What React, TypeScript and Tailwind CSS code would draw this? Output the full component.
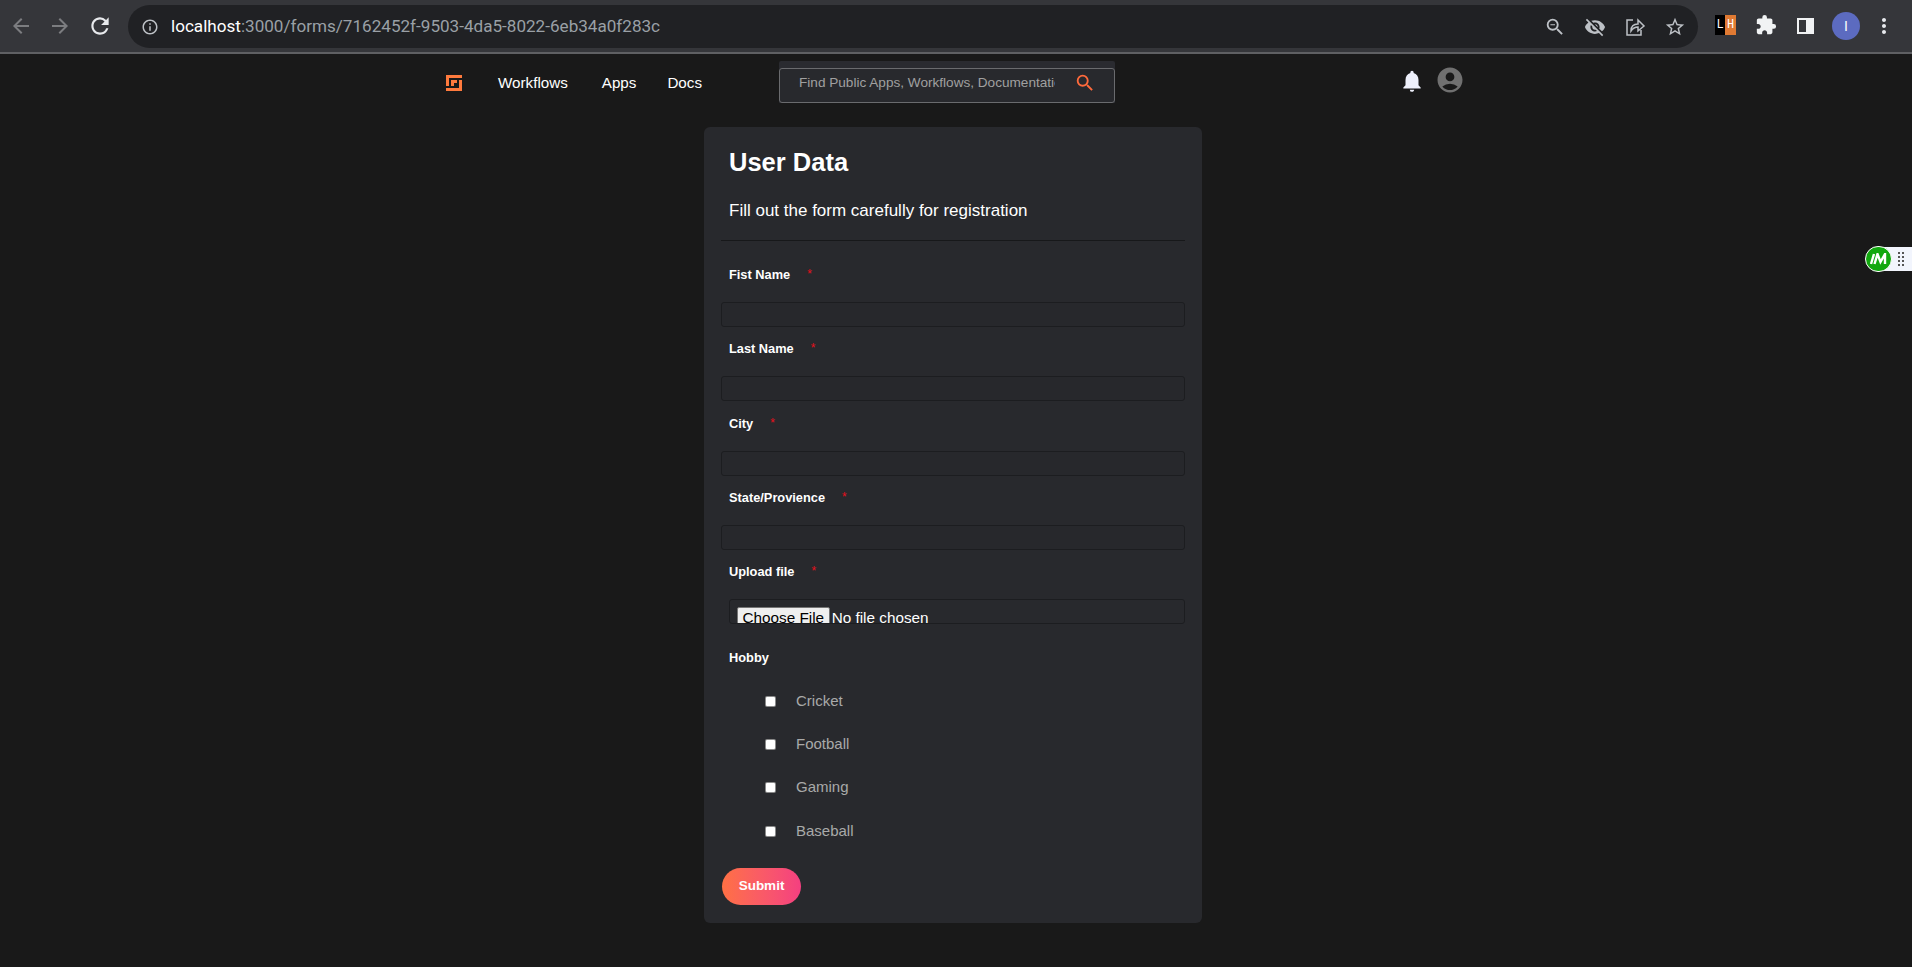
import React from "react";
import {
  MdArrowBack, MdArrowForward, MdRefresh, MdInfoOutline, MdZoomOut, MdVisibilityOff, MdStarBorder,
  MdExtension, MdMoreVert, MdNotifications, MdAccountCircle, MdSearch,
} from "react-icons/md";

const arial = "font-['Liberation_Sans',Arial,sans-serif]";

function Field({ label, required = true, file = false }: { label: string; required?: boolean; file?: boolean }) {
  return (
    <div className="h-[74.3px]">
      <div className="flex h-4 mb-[19px] pl-2 text-[12.8px] leading-4 font-bold text-white">
        <span>{label}</span>
        {required && <span className="ml-[17px] -mt-px text-[12px] font-normal text-[#e8101c]">*</span>}
      </div>
      {file ? (
        <div className="ml-2 h-[25px] border border-[#1c1d20] rounded-[3px] pl-[7px] pt-[7px] overflow-hidden">
          <input
            type="file"
            className="block text-[15.3px] leading-[18px] text-white file:bg-[#efefef] file:text-black file:border file:border-[#767676] file:border-solid file:rounded-[2px] file:px-[4.5px] file:py-px file:mr-[2px] file:h-[22px]"
          />
        </div>
      ) : (
        <input type="text" className="block w-full h-[25px] bg-[#27282c] border border-[#1c1d20] rounded-[3px] outline-none" />
      )}
    </div>
  );
}

function Hobby({ label }: { label: string }) {
  return (
    <label className="flex items-center h-[43.3px] pl-[45px]">
      <input type="checkbox" className="appearance-none w-[9px] h-[9px] bg-white rounded-[1px] shadow-[0_0_0_1px_#8a8a8a]" />
      <span className="ml-[21px] text-[15px] text-[#a9a9a9]">{label}</span>
    </label>
  );
}

export default function App() {
  return (
    <div className={`relative h-[967px] w-[1912px] overflow-hidden bg-[#191919] ${arial}`}>
      {/* Browser chrome */}
      <header className="flex items-start h-[54px] bg-[#35363a] border-b-2 border-[#5f6063]">
        <div className="flex items-center h-[52px] pl-[9px] gap-[15px] text-[24px]">
          <MdArrowBack className="text-[#7c7d80]" />
          <MdArrowForward className="text-[#7c7d80]" />
          <MdRefresh className="text-[#e8eaed] text-[26px]" />
        </div>
        <div className="ml-[15px] mt-[5px] flex items-center w-[1570px] h-[43px] rounded-full bg-[#202124] pl-[13px] pr-[12px]">
          <MdInfoOutline className="text-[18px] text-[#bdc1c6]" />
          <div className="ml-[12px] font-['Roboto',sans-serif] text-[17.1px] text-[#9aa0a6] whitespace-nowrap">
            <span className="text-white">localhost</span>:3000/forms/7162452f-9503-4da5-8022-6eb34a0f283c
          </div>
          <div className="ml-auto flex items-center gap-[18px] text-[22px] text-[#bdc1c6]">
            <MdZoomOut />
            <MdVisibilityOff />
            <svg width="22" height="22" viewBox="0 0 22 22" fill="none" stroke="currentColor" strokeWidth="1.5">
              <path d="M9 4H3v15h14v-5" />
              <path d="M7 15c0-5 3-7 7-7V4l6 6-6 5v-4c-3 0-5 1-7 4z" />
            </svg>
            <MdStarBorder />
          </div>
        </div>
        <div className="ml-[17px] mt-[15px] flex h-5 w-[21px] font-['Liberation_Mono',monospace] text-[12px] leading-5 text-center">
          <span className="w-[10px] bg-black text-white">L</span>
          <span className="w-[11px] bg-[#e07a33] text-white">H</span>
        </div>
        <MdExtension className="ml-[19px] mt-[14px] text-[22px] text-[#f1f3f4]" />
        <div className="ml-[20px] mt-[18px] flex w-[17px] h-4 border-[2px] border-[#f1f3f4]">
          <div className="ml-auto w-[6px] bg-[#f1f3f4]" />
        </div>
        <div className="ml-[18px] mt-3 flex items-center justify-center w-7 h-7 rounded-full bg-[#5c6bc0] text-[14px] text-white">I</div>
        <MdMoreVert className="ml-[12px] mt-[14px] text-[24px] text-[#e8eaed]" />
      </header>

      {/* App navigation */}
      <nav className="flex h-[73px] items-start pl-[446px]">
        <svg className="mt-[21px]" width="16" height="16" viewBox="0 0 16 16" fill="#ff7a3d">
          <path d="M0 0h16v3H3v8H0z" />
          <path d="M5 5h6v3H8v3H5z" />
          <path d="M13 5h3v11H0v-3h13z" />
        </svg>
        <div className="mt-[19px] ml-9 flex text-[15.2px] leading-5 text-white">
          <span>Workflows</span>
          <span className="ml-[34px]">Apps</span>
          <span className="ml-[31px]">Docs</span>
        </div>
        <div className="ml-[77px] mt-[7px] w-[336px] pt-[7px] bg-[#2a2b30] rounded-t-[2px]">
          <div className="flex items-center h-[35px] bg-[#28292d] border border-[#6a6b6e] rounded-[3px] pl-[19px] pb-[5px]">
            <input
              placeholder="Find Public Apps, Workflows, Documentation"
              className="w-[256px] bg-transparent outline-none text-[13.6px] text-white placeholder:text-[#a0a0a0]"
            />
            <MdSearch className="ml-[19px] text-[22px] text-[#ff6a3c]" />
          </div>
        </div>
        <MdNotifications className="ml-[284px] mt-[14px] text-[26px] text-[#eef0fb]" />
        <MdAccountCircle className="ml-[10px] mt-[11px] text-[30px] text-[#707070]" />
      </nav>

      {/* Form card */}
      <main className="ml-[704px] w-[498px] rounded-[6px] bg-[#28292d] px-[17px] pt-[21px] pb-[18px]">
        <h1 className="pl-2 text-[25.5px] leading-7 font-bold text-white">User Data</h1>
        <p className="pl-2 mt-[23px] text-[17px] leading-6 text-white">Fill out the form carefully for registration</p>
        <div className="mt-[17px] mb-[26px] h-px bg-[#17181a]" />
        <Field label="Fist Name" />
        <Field label="Last Name" />
        <Field label="City" />
        <Field label="State/Provience" />
        <Field label="Upload file" file />
        <div className="mt-[12px]">
          <div className="pl-2 h-4 text-[12.8px] leading-4 font-bold text-white">Hobby</div>
          <div className="mt-[13px]">
            <Hobby label="Cricket" />
            <Hobby label="Football" />
            <Hobby label="Gaming" />
            <Hobby label="Baseball" />
          </div>
        </div>
        <button className="mt-[15px] ml-px block w-[79px] h-[37px] rounded-full bg-gradient-to-r from-[#ff7043] to-[#f43f80] text-[13.5px] font-bold text-white">
          Submit
        </button>
      </main>

      {/* Floating widget */}
      <aside className="absolute right-0 top-[247px] flex items-center w-[46px] h-[24px] bg-[#f2f5fd] rounded-l-full">
        <div className="absolute -left-px -top-px flex items-center justify-center w-[27px] h-[26px] rounded-full bg-[#12a80f] border border-white">
          <svg width="17" height="12" viewBox="0 0 17 12" fill="none" stroke="white" strokeWidth="2.4">
            <path d="M1 11L4 1M4.5 11L7.5 1L10.5 9L15 1V11" />
          </svg>
        </div>
        <div className="ml-[32px] grid grid-cols-2 gap-[2px]">
          {[0, 1, 2, 3, 4, 5, 6, 7].map((i) => (
            <span key={i} className="w-[2px] h-[2px] bg-[#555]" />
          ))}
        </div>
      </aside>
    </div>
  );
}
